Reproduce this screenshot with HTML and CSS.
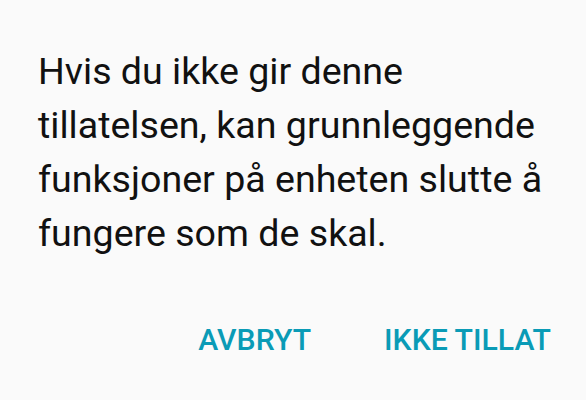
FILE: index.html
```html
<!DOCTYPE html>
<html>
<head>
    <title>Tillatelse</title>
    <link rel="stylesheet" href="styles.css">
</head>
<body>
    <div class="dialog">
        <p class="message">Hvis du ikke gir denne tillatelsen, kan grunnleggende funksjoner på enheten slutte å fungere som de skal.</p>
        <div class="buttons">
            <button type="button" class="btn">AVBRYT</button>
            <button type="button" class="btn">IKKE TILLAT</button>
        </div>
    </div>
</body>
</html>
```

FILE: styles.css
```css
html, body { margin: 0; padding: 0; background: #fafafa; }
body { font-family: Roboto, "Noto Sans", sans-serif; width: 586px; height: 400px; overflow: hidden; }
.dialog { padding: 44px 35px 0 38px; }
.message { margin: 0; font-size: 37.6px; line-height: 54px; color: #111; }
.buttons { display: flex; justify-content: flex-end; gap: 73px; margin-top: 62px; }
.btn { background: none; border: none; padding: 0; font-family: Roboto, sans-serif; font-weight: 500; font-size: 30.2px; line-height: normal; color: #0a9bb6; cursor: pointer; }
```
